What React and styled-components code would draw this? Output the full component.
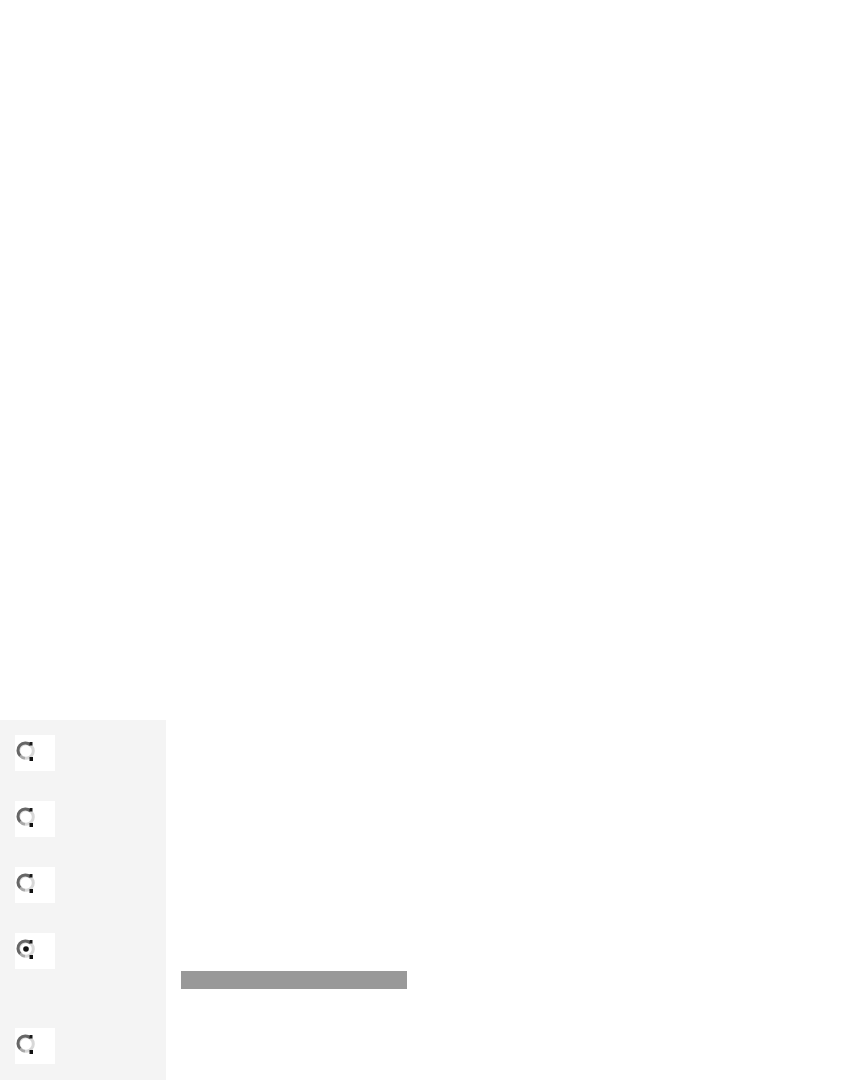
import React from 'react'
import styled, { createGlobalStyle } from 'styled-components'

const GlobalStyle = createGlobalStyle`
  html, body {
    margin: 0;
    padding: 0;
    background: #ffffff;
    font-family: 'Liberation Sans', Arial, sans-serif;
  }
`

const Page = styled.div`
  display: flex;
  flex-direction: column;
  min-height: 1080px;
`

const TopSpace = styled.div`
  height: 720px;
`

const Body = styled.div`
  display: flex;
  flex: 1;
`

const Sidebar = styled.div`
  width: 166px;
  min-height: 360px;
  background: #f4f4f4;
  padding: 15px 15px;
  box-sizing: border-box;
  display: flex;
  flex-direction: column;
  gap: 30px;
`

const OptionBox = styled.div`
  width: 40px;
  height: 36px;
  background: #ffffff;
  margin-top: ${(p) => (p.$spaced ? '29px' : '0')};
  display: flex;
  align-items: flex-start;
`

const Main = styled.div`
  flex: 1;
  padding-left: 15px;
`

const Bar = styled.div`
  width: 226px;
  height: 18px;
  margin-top: 251px;
  background: #999999;
`

function Radio({ checked }) {
  return (
    <svg width="40" height="36" viewBox="0 0 40 36">
      {/* light full ring */}
      <circle cx="11" cy="16" r="7.3" fill="none" stroke="#d8d8d8" strokeWidth="3" />
      {/* dark left/top arc */}
      <path d="M15.5 10 A7.3 7.3 0 0 0 5.3 20.8" fill="none" stroke="#666666" strokeWidth="3" />
      {/* mid-grey lower-left arc */}
      <path d="M5.3 20.8 A7.3 7.3 0 0 0 10 23.3" fill="none" stroke="#a8a8a8" strokeWidth="2.6" />
      {/* dark ticks */}
      <rect x="14.5" y="7" width="3" height="3.5" fill="#1a1a1a" />
      <rect x="14.5" y="22" width="3.5" height="4" fill="#111111" />
      {checked && <circle cx="11" cy="16" r="2.8" fill="#111111" />}
    </svg>
  )
}

const options = [false, false, false, true, false]

export default function App() {
  return (
    <Page>
      <GlobalStyle />
      <TopSpace />
      <Body>
        <Sidebar>
          {options.map((checked, i) => (
            <OptionBox key={i} $spaced={i === 4}>
              <Radio checked={checked} />
            </OptionBox>
          ))}
        </Sidebar>
        <Main>
          <Bar />
        </Main>
      </Body>
    </Page>
  )
}
